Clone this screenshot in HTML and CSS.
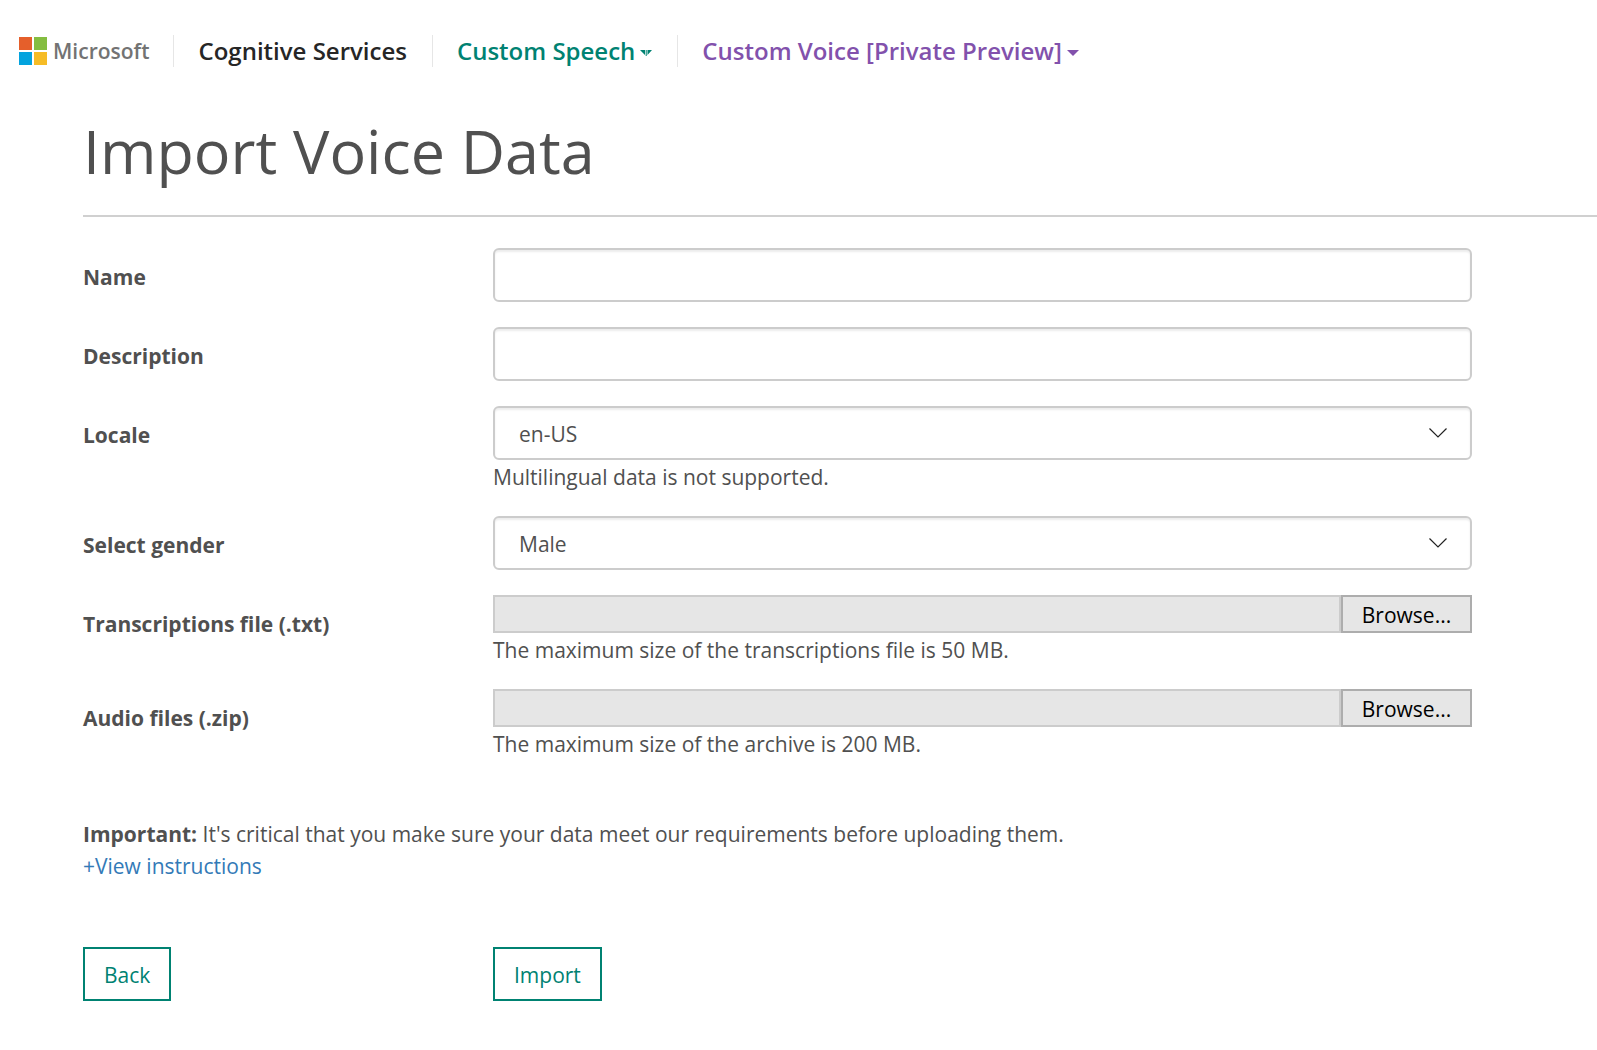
FILE: index.html
```html
<!DOCTYPE html>
<html lang="en">
<head>
<meta charset="utf-8">
<meta name="viewport" content="width=device-width, initial-scale=1">
<title>Import Voice Data - Cognitive Services</title>
<link rel="stylesheet" href="styles.css">
</head>
<body>
<header class="topbar">
  <a class="brand" href="#">
    <svg class="brand-mark" viewBox="0 0 28 28" aria-hidden="true">
      <rect x="0" y="0" width="13" height="13" fill="#e55f2b"/>
      <rect x="15" y="0" width="13" height="13" fill="#84bd40"/>
      <rect x="0" y="15" width="13" height="13" fill="#03a3de"/>
      <rect x="15" y="15" width="13" height="13" fill="#f6bc26"/>
    </svg>
    <span>Microsoft</span>
  </a>
  <nav class="nav">
    <a class="nav-item" href="#">Cognitive Services</a>
    <a class="nav-item nav-speech" href="#">Custom Speech
      <svg class="caret" viewBox="0 0 12 6" aria-hidden="true"><path d="M0 0H5V5ZM5.700 0H6.700V6H5.700ZM7.500 0H12L7.500 5Z" fill="currentColor"/></svg>
    </a>
    <a class="nav-item nav-voice" href="#">Custom Voice [Private Preview]
      <svg class="caret" viewBox="0 0 12 6" aria-hidden="true"><path d="M0 0H12L6 6Z" fill="currentColor"/></svg>
    </a>
  </nav>
</header>
<main class="page">
  <h1 class="title">Import Voice Data</h1>
  <form class="form">
    <div class="row">
      <label class="label" for="name">Name</label>
      <div class="field"><input class="control" id="name" type="text"></div>
    </div>
    <div class="row">
      <label class="label" for="description">Description</label>
      <div class="field"><input class="control" id="description" type="text"></div>
    </div>
    <div class="row">
      <label class="label" for="locale">Locale</label>
      <div class="field">
        <div class="select">
          <select class="control" id="locale"><option>en-US</option></select>
          <svg class="chevron" viewBox="0 0 18 10" aria-hidden="true"><path d="M.5.5L9 9L17.500.5" fill="none" stroke="#222" stroke-width="1.200"/></svg>
        </div>
        <p class="help">Multilingual data is not supported.</p>
      </div>
    </div>
    <div class="row">
      <label class="label" for="gender">Select gender</label>
      <div class="field">
        <div class="select">
          <select class="control" id="gender"><option>Male</option><option>Female</option></select>
          <svg class="chevron" viewBox="0 0 18 10" aria-hidden="true"><path d="M.5.5L9 9L17.500.5" fill="none" stroke="#222" stroke-width="1.200"/></svg>
        </div>
      </div>
    </div>
    <div class="row">
      <label class="label" for="transcriptions">Transcriptions file (.txt)</label>
      <div class="field">
        <div class="file"><input class="file-path" id="transcriptions" type="text" readonly><button class="browse" type="button">Browse...</button></div>
        <p class="help">The maximum size of the transcriptions file is 50 MB.</p>
      </div>
    </div>
    <div class="row">
      <label class="label" for="audio">Audio files (.zip)</label>
      <div class="field">
        <div class="file"><input class="file-path" id="audio" type="text" readonly><button class="browse" type="button">Browse...</button></div>
        <p class="help">The maximum size of the archive is 200 MB.</p>
      </div>
    </div>
    <div class="note">
      <p><strong>Important:</strong> It's critical that you make sure your data meet our requirements before uploading them.</p>
      <a class="link" href="#">+View instructions</a>
    </div>
    <div class="row">
      <div><button class="action" type="button">Back</button></div>
      <div><button class="action" type="submit">Import</button></div>
    </div>
  </form>
</main>
</body>
</html>
```
FILE: styles.css
```css
* { box-sizing: border-box; }

body {
  margin: 0;
  background: #fff;
  color: #505050;
  font: 21px/32px "Open Sans", "Noto Sans", sans-serif;
}

p { margin: 0; }
a { text-decoration: none; }
input, select, button { font: inherit; color: inherit; margin: 0; }

.topbar {
  display: flex;
  align-items: center;
  padding: 35px 19px 0;
}

.brand {
  display: flex;
  align-items: center;
  gap: 6px;
  padding-right: 24px;
  color: #737373;
  font-size: 21px;
  font-weight: 600;
}
.brand-mark { width: 28px; height: 28px; }

.nav { display: flex; }
.nav-item {
  display: flex;
  align-items: center;
  gap: 5px;
  padding: 0 25px 0 24px;
  border-left: 1px solid #e6e6e6;
  color: #262626;
  font-size: 24px;
  font-weight: 600;
  white-space: nowrap;
}
.nav-speech { color: #008272; }
.nav-voice { color: #8251ac; }
.caret { width: 12px; height: 6px; margin-top: 4px; }

.page { padding-left: 83px; }

.title {
  margin: 0;
  padding: 40px 0 20px;
  border-bottom: 2px solid #d0d0d0;
  font-size: 61px;
  font-weight: 400;
  line-height: 88px;
}

.form {
  display: flex;
  flex-direction: column;
  gap: 25px;
  padding: 31px 125px 40px 0;
}

.row {
  display: grid;
  grid-template-columns: 410px minmax(0, 1fr);
}

.label { padding-top: 13px; font-weight: 700; }

.control {
  display: block;
  width: 100%;
  height: 54px;
  padding: 2px 24px 0;
  border: 2px solid #ccc;
  border-radius: 6px;
  background: #fff;
  box-shadow: inset 0 2px 2px rgba(0, 0, 0, .075);
  appearance: none;
}

.select { display: grid; align-items: center; }
.select > * { grid-area: 1 / 1; }
.chevron {
  width: 18px;
  height: 10px;
  margin-right: 25px;
  justify-self: end;
  pointer-events: none;
}

.help { line-height: 31px; padding-top: 2px; margin-bottom: -2px; }

.file { display: flex; height: 38px; }
.file-path {
  flex: 1;
  min-width: 0;
  border: 2px solid #ccc;
  background: #e6e6e6;
}
.browse {
  width: 131px;
  padding: 2px 0 0;
  border: 2px solid #adadad;
  background: #e6e6e6;
  color: #000;
  line-height: 32px;
}

.note { padding: 35px 0 40px; }
.link { color: #337ab7; }

.action {
  height: 54px;
  padding: 2px 19px 0;
  border: 2px solid #008272;
  background: #fff;
  color: #008272;
}
```
